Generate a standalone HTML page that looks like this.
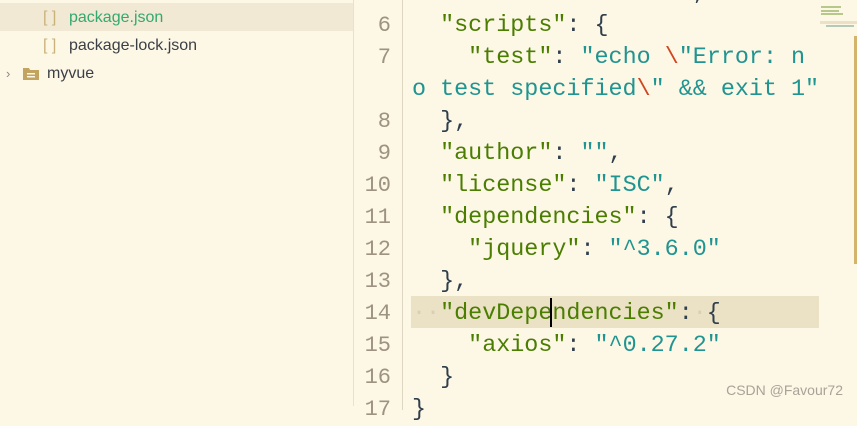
<!DOCTYPE html>
<html><head><meta charset="utf-8"><style>
html,body{margin:0;padding:0;width:857px;height:406px;overflow:hidden;background:#fdf7e6;}
.side{position:absolute;left:0;top:0;width:353px;height:406px;background:#fdf7e6;border-right:1px solid #e8e1cc;font-family:"Liberation Sans",sans-serif;font-size:16px;color:#3b4046;}
.row{position:absolute;left:0;width:353px;height:28px;line-height:30px;}
.br{color:#c9b27a;position:absolute;left:43px;}
.nm{position:absolute;left:69px;}
.code{position:absolute;left:354px;top:2px;width:503px;height:406px;font-family:"Liberation Mono","DejaVu Sans Mono",monospace;font-size:23.4px;}
.gut{position:absolute;left:48px;top:-2px;width:1px;height:410px;background:#ddd6c1;}
.ln{position:absolute;left:0;width:37px;text-align:right;color:#9d9380;height:32px;line-height:32px;font-size:22px;}
.l{position:absolute;left:58px;white-space:pre;height:32px;line-height:32px;color:#2f3e4b;}
.k{color:#4a7d00}.s{color:#1f9490}.e{color:#d0461f}
</style></head><body>
<div class="side">
 <div class="row" style="top:3px;background:#f1e9d3;"><span class="br">[ ]</span><span class="nm" style="color:#33a96f">package.json</span></div>
 <div class="row" style="top:31px;"><span class="br">[ ]</span><span class="nm">package-lock.json</span></div>
 <div class="row" style="top:59px;"><span style="position:absolute;left:6px;color:#888;font-size:13px;">›</span>
 <svg style="position:absolute;left:23px;top:8px" width="16" height="13"><path d="M0 1h6l1 2h9v10H0z" fill="#c2a35f"/><rect x="4" y="6" width="8" height="1.5" fill="#fdf7e6"/><rect x="4" y="9" width="8" height="1.5" fill="#fdf7e6"/></svg>
 <span class="nm" style="left:47px">myvue</span></div>
</div>
<div class="code">
 <div class="gut"></div>
 <div style="position:absolute;left:57px;top:294px;width:408px;height:32px;background:#ebe2c5;"></div>
 <div class="l" style="top:-24px">  <span class="k">"version"</span>: <span class="s">"1.0.0"</span>,</div>
 <div class="ln" style="top:8px">6</div><div class="l" style="top:8px">  <span class="k">"scripts"</span>: {</div>
 <div class="ln" style="top:40px">7</div><div class="l" style="top:40px">    <span class="k">"test"</span>: <span class="s">"echo <span class="e">\</span>"Error: n</span></div>
 <div class="l" style="top:72px"><span class="s">o test specified<span class="e">\</span>" &amp;&amp; exit 1"</span></div>
 <div class="ln" style="top:104px">8</div><div class="l" style="top:104px">  },</div>
 <div class="ln" style="top:136px">9</div><div class="l" style="top:136px">  <span class="k">"author"</span>: <span class="s">""</span>,</div>
 <div class="ln" style="top:168px">10</div><div class="l" style="top:168px">  <span class="k">"license"</span>: <span class="s">"ISC"</span>,</div>
 <div class="ln" style="top:200px">11</div><div class="l" style="top:200px">  <span class="k">"dependencies"</span>: {</div>
 <div class="ln" style="top:232px">12</div><div class="l" style="top:232px">    <span class="k">"jquery"</span>: <span class="s">"^3.6.0"</span></div>
 <div class="ln" style="top:264px">13</div><div class="l" style="top:264px">  },</div>
 <div class="ln" style="top:296px">14</div><div class="l" style="top:296px"><span style="color:#d8cfb5">··</span><span class="k">"devDependencies"</span>:<span style="color:#d8cfb5">·</span>{</div>
 <div style="position:absolute;left:196px;top:296px;width:2px;height:29px;background:#000;"></div>
 <div class="ln" style="top:328px">15</div><div class="l" style="top:328px">    <span class="k">"axios"</span>: <span class="s">"^0.27.2"</span></div>
 <div class="ln" style="top:360px">16</div><div class="l" style="top:360px">  }</div>
 <div class="ln" style="top:392px">17</div><div class="l" style="top:392px">}</div>
 <div style="position:absolute;left:500px;top:34px;width:3px;height:228px;background:#d4b46a;"></div>
 <div style="position:absolute;left:467px;top:4px;width:20px;height:2px;background:#b6c88a"></div>
 <div style="position:absolute;left:467px;top:8px;width:18px;height:2px;background:#b6c88a"></div>
 <div style="position:absolute;left:467px;top:11px;width:22px;height:2px;background:#b6c88a"></div>
 <div style="position:absolute;left:466px;top:19px;width:40px;height:3px;background:#ebe2c5"></div>
 <div style="position:absolute;left:472px;top:23px;width:28px;height:2px;background:#b6c8b8"></div>
 <div style="position:absolute;right:14px;top:380px;font-family:'Liberation Sans',sans-serif;font-size:14px;color:#a8a398;">CSDN @Favour72</div>
</div>
</body></html>
